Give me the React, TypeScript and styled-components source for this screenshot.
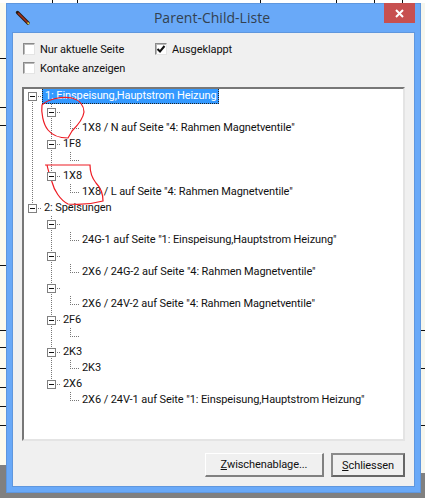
import React from "react";
import styled, { createGlobalStyle } from "styled-components";

const Global = createGlobalStyle`
  html, body { margin: 0; padding: 0; background: #fff; }
  #root { width: 425px; height: 498px; overflow: hidden; }
`;

const Stage = styled.div`
  position: relative;
  width: 425px;
  height: 498px;
  box-sizing: border-box;
  padding: 3px 4px 5px 6px;
  overflow: hidden;
  background: #fff;
  font-family: Roboto, "Liberation Sans", Arial, sans-serif;
  font-size: 11px;
  letter-spacing: -0.09px;
  color: #111;
`;

/* The document lying behind the dialog: a free canvas of fragments. */
const Backdrop = styled.div<{ $side: "left" | "right" }>`
  position: absolute;
  top: 0;
  ${(p) => (p.$side === "left" ? "left: 0; width: 6px; height: 465px; background: #fdfbee; border-top: 3px solid #fff;" : "right: 0; width: 4px; height: 473px; background: #f6f6ee; border-top: 3px solid #fff;")}
  box-sizing: border-box;
`;
const Shade = styled.div`
  position: absolute;
  left: 0;
  right: 0;
  bottom: 0;
  height: 33px;
  background: linear-gradient(#808080, #808080) left bottom / 6px 33px no-repeat,
    linear-gradient(#808080, #808080) right bottom / 4px 25px no-repeat,
    linear-gradient(#808080, #808080) left bottom / 100% 5px no-repeat;
`;
const HLine = styled.i<{ $y: number; $right?: boolean }>`
  position: absolute;
  top: ${(p) => p.$y}px;
  ${(p) => (p.$right ? "right: 0; width: 4px;" : "left: 0; width: 6px;")}
  height: 1px;
  background: #111;
`;
const VLine = styled.i<{ $x: number }>`
  position: absolute;
  top: 0;
  left: ${(p) => p.$x}px;
  width: 1px;
  height: 3px;
  background: #111;
`;

const Dialog = styled.div`
  position: relative;
  box-sizing: border-box;
  height: 490px;
  display: flex;
  flex-direction: column;
  background: #69a9f8;
  border: 1px solid #5f97de;
`;
const TitleBar = styled.div`
  position: relative;
  height: 28px;
  flex: none;
  display: flex;
  align-items: center;
  justify-content: center;
  padding: 0 3px 2px 0;
  box-sizing: border-box;
  font-family: "Open Sans", sans-serif;
  font-size: 14px;
  letter-spacing: 0.02px;
  color: #33414f;
`;
const AppIcon = styled.svg`
  position: absolute;
  left: 8px;
  top: 6px;
  width: 16px;
  height: 16px;
`;
const CloseButton = styled.div`
  position: absolute;
  top: -1px;
  right: 5px;
  width: 31px;
  height: 20px;
  background: #c75050;
  display: flex;
  align-items: center;
  justify-content: center;
`;
const Body = styled.div`
  flex: 1;
  margin: 0 5px 5px;
  border: 1px solid #5f97de;
  background: #f0f0f0;
  display: flex;
  flex-direction: column;
  padding: 9px 9px 9px;
`;
const Options = styled.div`
  display: grid;
  grid-template-columns: 132px 1fr;
  grid-auto-rows: 14px;
  row-gap: 5px;
  padding-left: 1px;
  margin-bottom: 12px;
  height: 33px;
`;
const CheckItem = styled.label`
  display: flex;
  align-items: center;
  gap: 5px;
  color: #111;
`;
const CheckBox = styled.span`
  width: 12px;
  height: 12px;
  flex: none;
  box-sizing: border-box;
  background: #fff;
  border: 1px solid;
  border-color: #8a8a8a #e4e4e4 #e4e4e4 #8a8a8a;
  box-shadow: inset 1px 1px 0 #b8b8b8;
  display: flex;
  align-items: center;
  justify-content: center;
`;
const TreeBox = styled.div`
  flex: 1;
  box-sizing: border-box;
  background: #fff;
  border-style: solid;
  border-width: 2px 2px 2px 2px;
  border-color: #777 #e4e4e4 #e4e4e4 #777;
  overflow: hidden;
`;
const TreeList = styled.div`
  margin: -1px 0 0 -1px;
  display: flex;
  flex-direction: column;
`;
const Row = styled.div`
  display: flex;
  height: 16px;
  align-items: stretch;
`;

type GuideKind = "none" | "line" | "toggle" | "elbow";

const dotsV = "repeating-linear-gradient(to bottom, #777 0 1px, transparent 1px 2px)";
const dotsH = "repeating-linear-gradient(to right, #777 0 1px, transparent 1px 2px)";

const Guide = styled.span<{ $kind: GuideKind; $up: boolean; $down: boolean; $reach: number }>`
  position: relative;
  width: 19px;
  flex: none;
  &::before {
    content: "";
    position: absolute;
    left: 9px;
    width: 1px;
    top: ${(p) => (p.$up ? 0 : 8)}px;
    bottom: ${(p) => (p.$down ? 0 : 8)}px;
    background: ${dotsV};
    display: ${(p) => (p.$kind === "none" ? "none" : "block")};
  }
  &::after {
    content: "";
    position: absolute;
    left: 9px;
    top: 8px;
    width: ${(p) => p.$reach}px;
    height: 1px;
    background: ${dotsH};
    display: ${(p) => (p.$kind === "toggle" || p.$kind === "elbow" ? "block" : "none")};
  }
`;
const Toggle = styled.span`
  position: absolute;
  z-index: 1;
  left: 5px;
  top: 4px;
  width: 9px;
  height: 9px;
  box-sizing: border-box;
  background: #fff;
  border: 1px solid #808080;
  &::after {
    content: "";
    position: absolute;
    left: 1px;
    top: 3px;
    width: 5px;
    height: 1px;
    background: #111;
  }
`;
const Label = styled.span<{ $selected?: boolean }>`
  display: block;
  box-sizing: border-box;
  height: 16px;
  line-height: 16px;
  white-space: nowrap;
  padding: 0 2px;
  ${(p) =>
    p.$selected
      ? `padding: 0 3px; background: #3399ff; color: #fff; outline: 1px dotted #222; outline-offset: -1px;`
      : ""}
`;

const Footer = styled.div`
  display: flex;
  justify-content: flex-end;
  gap: 7px;
  margin-top: 12px;
  flex: none;
`;
const Button = styled.button<{ $primary?: boolean; $width: number }>`
  width: ${(p) => p.$width}px;
  height: 24px;
  box-sizing: border-box;
  padding: 0;
  background: #f0f0f0;
  font: inherit;
  letter-spacing: inherit;
  color: #111;
  border-style: solid;
  ${(p) =>
    p.$primary
      ? "border-width: 2px; border-color: #8a8a8a #666 #666 #8a8a8a;"
      : "border-width: 1px 2px 2px 1px; border-color: #fff #808080 #808080 #fff;"}
`;
const Scribble = styled.svg`
  position: absolute;
  left: 0;
  top: 0;
  width: 425px;
  height: 498px;
  pointer-events: none;
`;

type Node = { label: string; level: 0 | 1 | 2; guides: GuideKind[]; up: boolean[]; down: boolean[]; selected?: boolean };

const rows: Node[] = [];
const root = (label: string, up: boolean, down: boolean, selected = false) =>
  rows.push({ label, level: 0, guides: ["toggle"], up: [up], down: [down], selected });
const mid = (label: string, rootLine: boolean, up: boolean, down: boolean) =>
  rows.push({
    label,
    level: 1,
    guides: [rootLine ? "line" : "none", "toggle"],
    up: [true, up],
    down: [true, down],
  });
const leaf = (label: string, rootLine: boolean, midLine: boolean) =>
  rows.push({
    label,
    level: 2,
    guides: [rootLine ? "line" : "none", midLine ? "line" : "none", "elbow"],
    up: [true, true, true],
    down: [true, true, false],
  });

root("1: Einspeisung,Hauptstrom Heizung", false, true, true);
mid("", true, true, true);
leaf('1X8 / N auf Seite "4: Rahmen Magnetventile"', true, true);
mid("1F8", true, true, true);
leaf("", true, true);
mid("1X8", true, true, false);
leaf('1X8 / L auf Seite "4: Rahmen Magnetventile"', true, false);
root("2: Speisungen", true, false);
mid("", false, true, true);
leaf('24G-1 auf Seite "1: Einspeisung,Hauptstrom Heizung"', false, true);
mid("", false, true, true);
leaf('2X6 / 24G-2 auf Seite "4: Rahmen Magnetventile"', false, true);
mid("", false, true, true);
leaf('2X6 / 24V-2 auf Seite "4: Rahmen Magnetventile"', false, true);
mid("2F6", false, true, true);
leaf("", false, true);
mid("2K3", false, true, true);
leaf("2K3", false, true);
mid("2X6", false, true, false);
leaf('2X6 / 24V-1 auf Seite "1: Einspeisung,Hauptstrom Heizung"', false, false);

export default function App() {
  return (
    <Stage>
      <Global />
      <Backdrop $side="left" />
      <Backdrop $side="right" />
      <Shade />
      {[58, 107, 125, 265, 330, 347, 368, 387, 406, 425].map((y) => (
        <HLine key={y} $y={y} />
      ))}
      {[330, 368, 425].map((y) => (
        <HLine key={y} $y={y} $right />
      ))}
      {[52, 77, 260, 336, 374, 402].map((x) => (
        <VLine key={x} $x={x} />
      ))}
      <Dialog>
        <TitleBar>
          <AppIcon viewBox="0 0 16 16">
            <path d="M2.5 2.5 L13 13" stroke="#2a1a10" strokeWidth="3.4" strokeLinecap="round" />
            <path d="M3 3 L12.5 12.5" stroke="#a8301c" strokeWidth="1.6" />
            <path d="M12.5 12.5 L14 14" stroke="#e8d84a" strokeWidth="1.6" />
          </AppIcon>
          Parent-Child-Liste
          <CloseButton>
            <svg width="9" height="9" viewBox="0 0 9 9">
              <path d="M1 1 L8 8 M8 1 L1 8" stroke="#fff" strokeWidth="2" />
            </svg>
          </CloseButton>
        </TitleBar>
        <Body>
          <Options>
            <CheckItem>
              <CheckBox />
              Nur aktuelle Seite
            </CheckItem>
            <CheckItem>
              <CheckBox>
                <svg width="10" height="10" viewBox="0 0 10 10">
                  <path d="M1.5 5 L4 7.5 L8.5 2" fill="none" stroke="#111" strokeWidth="2" />
                </svg>
              </CheckBox>
              Ausgeklappt
            </CheckItem>
            <CheckItem>
              <CheckBox />
              Kontake anzeigen
            </CheckItem>
          </Options>
          <TreeBox>
            <TreeList>
              {rows.map((r, i) => (
                <Row key={i}>
                  {r.guides.map((g, j) => (
                    <Guide
                      key={j}
                      $kind={g}
                      $up={r.up[j]}
                      $down={r.down[j]}
                      $reach={g === "elbow" ? (r.label ? 10 : 9) : 10}
                    >
                      {g === "toggle" && <Toggle />}
                    </Guide>
                  ))}
                  {r.label && <Label $selected={r.selected}>{r.label}</Label>}
                </Row>
              ))}
            </TreeList>
          </TreeBox>
          <Footer>
            <Button $width={119}>
              <u>Z</u>wischenablage...
            </Button>
            <Button $primary $width={74}>
              <u>S</u>chliessen
            </Button>
          </Footer>
        </Body>
      </Dialog>
      <Scribble viewBox="0 0 425 498">
        <path
          d="M42 105 C48 99 62 96 72 98 C80 100 84 106 84 112 C83 120 76 127 72 131 L68 138 C60 138 52 135 48 130 C43 124 41 112 42 105 Z"
          fill="none"
          stroke="#ee1c24"
          strokeWidth="1.2"
        />
        <path
          d="M45 165 L90 165 C90 172 92 178 96 183 C100 187 103 192 103 201 C92 204 78 205 68 204 C60 200 54 190 52 182 C50 176 48 170 47 165"
          fill="none"
          stroke="#ee1c24"
          strokeWidth="1.2"
        />
      </Scribble>
    </Stage>
  );
}
